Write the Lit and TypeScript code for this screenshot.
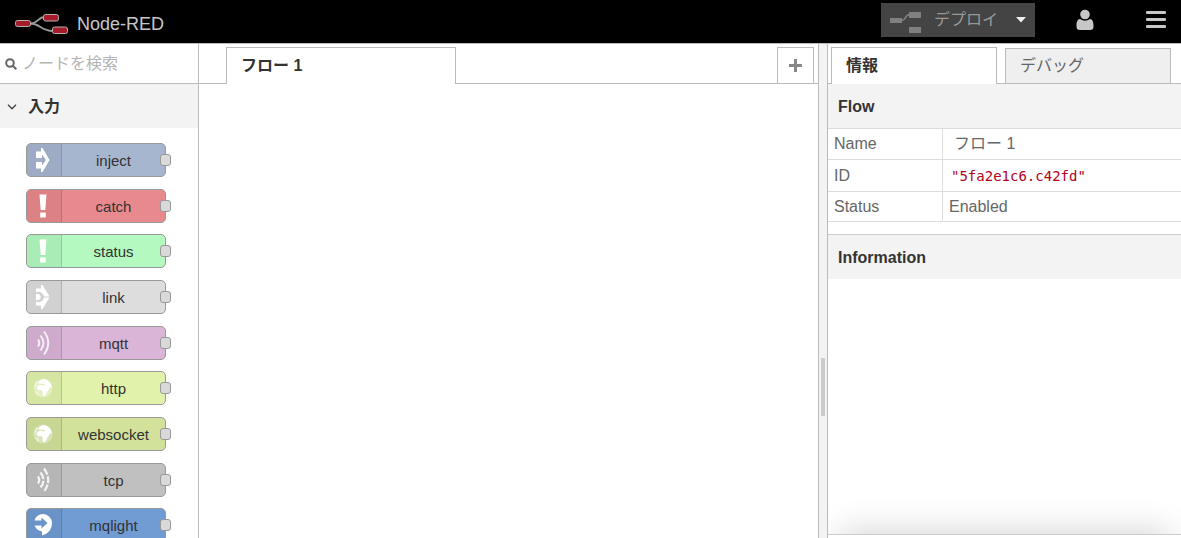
import { LitElement, html, svg, css } from "lit";
import { customElement, property } from "lit/decorators.js";

const globe = svg`
  <circle cx="10" cy="10" r="9.5" fill="#fff" fill-opacity=".35" />
  <path fill="#fff" d="M5 5 7 2.500 10.500 1l4 1.200L18 6l.8 4-1.800-1-1.200 2.800L14 14l-.8 2.500L11 18.500 9.500 17l.3-3-1.600-2-3 .2L3.500 10 5 7.500l3-.7 3 1 1-1.300-2-1L7.500 6z" />
  <path fill="#fff" fill-opacity=".5" d="M1 8l2-4 2-1-1 3-2 4zM2 13l3 1 1 3-1 1z" />`;

const bang = svg`<path fill="#fff" d="M6.500 0h7l-1.200 15.500H7.700zM7.200 18h5.600v5H7.200z" />`;

const glyphs: Record<string, unknown> = {
  inject: svg`<svg viewBox="0 0 16 26"><path fill="#fff" d="M1 4.500h5V1h1.500l7 12-7 12H6v-3.500H1V15h6v3.500l4-5.500-4-5.500V11H1z" /></svg>`,
  bang: svg`<svg viewBox="0 0 20 23">${bang}</svg>`,
  link: svg`<svg viewBox="0 0 16 26"><path fill="#fff" d="M1 4.500h5V1h1.500l7 11.500H9A5.500 5.500 0 0 0 1 8.500zM1 21.500h5V25h1.500l7-11.500H9a5.500 5.500 0 0 1-8 4z" /><path fill="#fff" d="M1 10.200a3.200 3.200 0 1 1 0 5.600z" /></svg>`,
  waves: svg`<svg viewBox="0 0 16 26" fill="none" stroke="#fff" stroke-opacity=".8" stroke-width="2"><path d="M3 9.500q2.500 3.500 0 7" /><path d="M5.500 5.500q6 7.500 0 15M9 1.500q8.500 11.500 0 23" /></svg>`,
  globe: svg`<svg viewBox="0 0 20 20">${globe}</svg>`,
  bridge: svg`<svg viewBox="0 0 16 26" fill="none" stroke="#fff" stroke-opacity=".85" stroke-width="2.200"><path d="M3 9.500q2.500 3.500 0 7" /><path d="M5.500 5.500q6 7.500 0 15" stroke-dasharray="7.200 1.800" /><path d="M9 1.500q8.500 11.500 0 23" stroke-dasharray="7 1.500" /></svg>`,
  mqlight: svg`<svg viewBox="0 0 20 22"><path fill="#fff" d="M10 0a9 9 0 0 0-8.500 6.500H8.500V3.500L14.500 9l-6 5.500v-3H1.500q2 5 7.500 6v4q10-3 10-12.500A9 9 0 0 0 10 0z" /></svg>`,
};

interface PaletteEntry {
  name: string;
  color: string;
  icon: string;
}

const inputNodes: PaletteEntry[] = [
  { name: "inject", color: "#a6b6cf", icon: "inject" },
  { name: "catch", color: "#e8898d", icon: "bang" },
  { name: "status", color: "#b4f9bf", icon: "bang" },
  { name: "link", color: "#dddddd", icon: "link" },
  { name: "mqtt", color: "#dab5d8", icon: "waves" },
  { name: "http", color: "#e1f2ab", icon: "globe" },
  { name: "websocket", color: "#d2e29b", icon: "globe" },
  { name: "tcp", color: "#c0c0c0", icon: "bridge" },
  { name: "mqlight", color: "#709bd3", icon: "mqlight" },
];

@customElement("palette-node")
export class PaletteNode extends LitElement {
  @property() name = "";
  @property() icon = "";

  static styles = css`
    :host {
      display: flex;
      position: relative;
      box-sizing: border-box;
      width: 140px;
      height: 34px;
      border: 1px solid #999;
      border-radius: 5px;
      color: #333;
      font-size: 15px;
      line-height: 33px;
      cursor: move;
    }
    .icon {
      box-sizing: border-box;
      display: flex;
      align-items: center;
      justify-content: center;
      width: 35px;
      padding-right: 2px;
      border-right: 1px solid rgba(0, 0, 0, 0.14);
      border-radius: 4px 0 0 4px;
      background: rgba(0, 0, 0, 0.05);
    }
    .icon svg {
      width: 20px;
      height: 26px;
    }
    .label {
      flex: 1;
      text-align: center;
    }
    .port {
      position: absolute;
      right: -6px;
      top: 10px;
      box-sizing: border-box;
      width: 11px;
      height: 12px;
      border: 1px solid #999;
      border-radius: 3px;
      background: #d9d9d9;
    }
  `;

  render() {
    return html`
      <span class="icon">${glyphs[this.icon]}</span>
      <span class="label">${this.name}</span>
      <span class="port"></span>
    `;
  }
}

@customElement("app-root")
export class AppRoot extends LitElement {
  static styles = css`
    :host {
      display: flex;
      flex-direction: column;
      height: 100vh;
      overflow: hidden;
      background: #fff;
      color: #666;
      font: 16px/20px "Liberation Sans", "Noto Sans CJK JP", sans-serif;
    }
    button,
    input {
      margin: 0;
      padding: 0;
      border: 0;
      background: none;
      color: inherit;
      font: inherit;
    }
    a {
      color: inherit;
      text-decoration: none;
    }
    h2,
    h3 {
      margin: 0;
      font-size: 16px;
      line-height: 20px;
      color: #333;
    }
    .header {
      display: flex;
      align-items: center;
      box-sizing: border-box;
      height: 44px;
      flex: none;
      border-bottom: 1px solid #bbb;
      background: #000;
      color: #c7c7c7;
    }
    .brand {
      flex: 1;
      display: flex;
      align-items: center;
      gap: 9px;
      padding: 4px 0 0 15px;
      font-size: 18px;
    }
    .logo {
      width: 53px;
      height: 22px;
    }
    .deploy {
      display: flex;
      height: 34px;
      margin-bottom: 3px;
      background: #444;
      color: #999;
    }
    .deploy-main {
      display: flex;
      align-items: center;
      gap: 13px;
      padding-left: 9px;
    }
    .deploy-main svg {
      margin-top: 4px;
    }
    .deploy-menu {
      width: 37px;
      padding-left: 18px;
    }
    .header svg {
      display: block;
    }
    .user {
      padding: 0 52px 4px 41px;
    }
    .menu {
      padding: 0 15px 4px 0;
    }
    .main {
      flex: 1;
      min-height: 0;
      display: grid;
      grid-template-columns: 199px minmax(0, 1fr) 8px 354px;
    }
    .palette {
      border-right: 1px solid #bbb;
      overflow: hidden;
    }
    .search {
      display: flex;
      align-items: center;
      gap: 5px;
      box-sizing: border-box;
      height: 40px;
      padding-left: 5px;
      border-bottom: 1px solid #bbb;
    }
    .search input {
      flex: 1;
      min-width: 0;
      outline: 0;
    }
    .search input::placeholder {
      color: #b5b5b5;
      opacity: 1;
    }
    .category {
      display: flex;
      align-items: center;
      gap: 11px;
      width: 100%;
      height: 44px;
      padding: 2px 0 0 7px;
      background: #f3f3f3;
      color: #333;
      font-weight: bold;
    }
    .nodes {
      padding: 15px 26px;
    }
    palette-node + palette-node {
      margin-top: 12px;
    }
    palette-node:nth-child(3n) {
      margin-top: 11px;
    }
    .workspace {
      border-right: 1px solid #bbb;
    }
    .tabs {
      display: flex;
      align-items: flex-end;
      box-sizing: border-box;
      height: 40px;
      border-bottom: 1px solid #bbb;
    }
    .tab {
      box-sizing: border-box;
      height: 35px;
      border: 1px solid #bbb;
      border-bottom: 0;
      padding: 7px 14px;
      background: #efefef;
    }
    .tab.active {
      height: 37px;
      margin-bottom: -1px;
      padding-top: 8px;
      background: #fff;
      color: #333;
      font-weight: bold;
    }
    .flow-tab {
      width: 230px;
      margin-left: 27px;
    }
    .add {
      display: flex;
      align-items: center;
      justify-content: center;
      box-sizing: border-box;
      width: 37px;
      height: 36px;
      margin: 0 4px 0 auto;
      border: 1px solid #bbb;
      border-bottom: 0;
    }
    .separator {
      display: flex;
      align-items: center;
      justify-content: center;
      background: #f3f3f3;
    }
    .grip {
      width: 4px;
      height: 58px;
      margin-top: 192px;
      background: #ccc;
    }
    .sidebar {
      display: flex;
      flex-direction: column;
      border-left: 1px solid #bbb;
      min-width: 0;
    }
    .sidebar .tabs {
      gap: 8px;
      padding: 0 10px 0 3px;
    }
    .sidebar .tab {
      flex: 1;
    }
    .section {
      padding: 13px 10px 11px;
      background: #f3f3f3;
    }
    .info {
      margin-top: 12px;
      border-top: 1px solid #ccc;
    }
    table {
      width: 100%;
      border-collapse: collapse;
    }
    th,
    td {
      height: 30px;
      padding: 0 6px;
      border-top: 1px solid #ddd;
      border-bottom: 1px solid #ddd;
      font-weight: normal;
      text-align: left;
    }
    tr:last-child > * {
      height: 29px;
    }
    th {
      width: 102px;
      border-right: 1px solid #ddd;
    }
    .name {
      padding-left: 11px;
    }
    .id {
      height: 31px;
      padding-left: 8px;
      color: #b0001c;
      font: 14px/20px "DejaVu Sans Mono", monospace;
    }
    .tips {
      flex: none;
      height: 36px;
      margin: auto 0 3px;
      border-bottom: 1px solid #ccc;
      overflow: hidden;
      display: flex;
      align-items: flex-end;
    }
    .shade {
      flex: 1;
      height: 40px;
      margin: 0 12px -40px;
      box-shadow: 0 0 36px rgba(0, 0, 0, 0.2);
    }
  `;

  render() {
    return html`
      <header class="header">
        <div class="brand">
          <svg class="logo" viewBox="0 0 53 22" fill="none">
            <path d="M15 10.500c9 0 7-6.500 15-6.500M15 10.500c11 0 10 7.500 23 7.500" stroke="#999" stroke-width="1.800" />
            <g fill="#a51c2b" stroke="#b7b1b1">
              <rect x=".5" y="7.500" width="15" height="6" rx="2" />
              <rect x="28.500" y="1.500" width="15" height="6.500" rx="2" />
              <rect x="37.500" y="14" width="15" height="6.500" rx="2" />
            </g>
          </svg>
          <span>Node-RED</span>
        </div>
        <div class="deploy">
          <button class="deploy-main">
            <svg width="31" height="21" viewBox="0 0 31 21">
              <path d="M11 8.500c6 0 3-6 9-6" fill="none" stroke="#808080" stroke-width="1.500" />
              <path d="M0 6h12v5H0zM19 0h12v6H19zM19 15h12v6H19z" fill="#808080" />
            </svg>
            <span>デプロイ</span>
          </button>
          <button class="deploy-menu" aria-label="デプロイ">
            <svg width="10" height="6" viewBox="0 0 10 6"><path d="M0 0h10L5 5.500z" fill="#eee" /></svg>
          </button>
        </div>
        <button class="user" aria-label="user">
          <svg width="18" height="22" viewBox="0 0 18 22" fill="#c7c7c7">
            <path d="M4 10C1 10 .5 14 .5 17c0 3 1 4 3.500 4h10c2.500 0 3.500-1 3.500-4 0-3-.5-7-3.500-7q-5 3.500-10 0z" />
            <circle cx="9" cy="5.500" r="4.800" />
          </svg>
        </button>
        <button class="menu" aria-label="menu">
          <svg width="20" height="17" viewBox="0 0 20 17" fill="#c7c7c7">
            <rect width="20" height="3" rx="1" />
            <rect y="7" width="20" height="3" rx="1" />
            <rect y="14" width="20" height="3" rx="1" />
          </svg>
        </button>
      </header>
      <main class="main">
        <aside class="palette">
          <label class="search">
            <svg width="12" height="12" viewBox="0 0 12 12" fill="none" stroke="#666" stroke-width="2">
              <circle cx="5" cy="5" r="3.800" />
              <path d="m7.800 7.800 3.500 3.500" />
            </svg>
            <input type="text" placeholder="ノードを検索" />
          </label>
          <button class="category">
            <svg width="10" height="6" viewBox="0 0 10 6" fill="none" stroke="#444" stroke-width="1.400">
              <path d="m1 .8 4 4 4-4" />
            </svg>
            <span>入力</span>
          </button>
          <div class="nodes">
            ${inputNodes.map(
              (n) => html`<palette-node
                name=${n.name}
                icon=${n.icon}
                style="background:${n.color}"
              ></palette-node>`
            )}
          </div>
        </aside>
        <section class="workspace">
          <nav class="tabs">
            <a class="tab active flow-tab" href="#flow">フロー 1</a>
            <button class="add" aria-label="add">
              <svg width="13" height="13" viewBox="0 0 13 13"><path d="M5 0h3v5h5v3H8v5H5V8H0V5h5z" fill="#888" /></svg>
            </button>
          </nav>
        </section>
        <div class="separator"><div class="grip"></div></div>
        <aside class="sidebar">
          <nav class="tabs">
            <a class="tab active" href="#info">情報</a>
            <a class="tab" href="#debug">デバッグ</a>
          </nav>
          <h2 class="section">Flow</h2>
          <table>
            <tr><th scope="row">Name</th><td class="name">フロー 1</td></tr>
            <tr><th scope="row">ID</th><td class="id">"5fa2e1c6.c42fd"</td></tr>
            <tr><th scope="row">Status</th><td>Enabled</td></tr>
          </table>
          <h3 class="section info">Information</h3>
          <div class="tips"><div class="shade"></div></div>
        </aside>
      </main>
    `;
  }
}
